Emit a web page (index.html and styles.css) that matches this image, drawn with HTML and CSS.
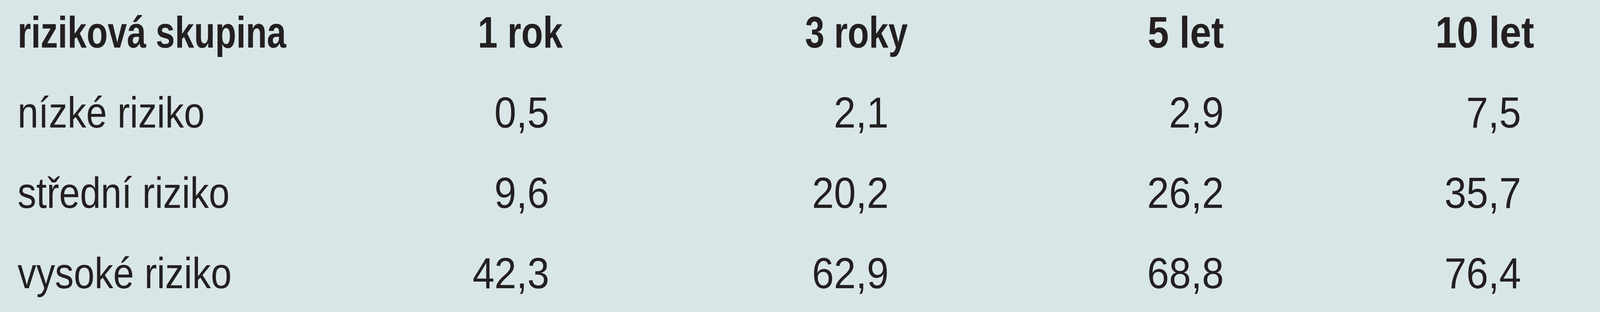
FILE: index.html
```html
<!DOCTYPE html>
<html lang="cs">
<head>
<meta charset="utf-8">
<title>Riziková skupina</title>
<link rel="stylesheet" href="styles.css">
</head>
<body>
<div class="risk-table">
  <div class="cell label head"><span class="t">riziková skupina</span></div>
  <div class="cell head c1"><span class="t">1 rok</span></div>
  <div class="cell head c2"><span class="t">3 roky</span></div>
  <div class="cell head c3"><span class="t">5 let</span></div>
  <div class="cell head c4"><span class="t">10 let</span></div>

  <div class="cell label"><span class="t">nízké riziko</span></div>
  <div class="cell num c1"><span class="t">0,5</span></div>
  <div class="cell num c2"><span class="t">2,1</span></div>
  <div class="cell num c3"><span class="t">2,9</span></div>
  <div class="cell num c4"><span class="t">7,5</span></div>

  <div class="cell label"><span class="t">střední riziko</span></div>
  <div class="cell num c1"><span class="t">9,6</span></div>
  <div class="cell num c2"><span class="t">20,2</span></div>
  <div class="cell num c3"><span class="t">26,2</span></div>
  <div class="cell num c4"><span class="t">35,7</span></div>

  <div class="cell label"><span class="t">vysoké riziko</span></div>
  <div class="cell num c1"><span class="t">42,3</span></div>
  <div class="cell num c2"><span class="t">62,9</span></div>
  <div class="cell num c3"><span class="t">68,8</span></div>
  <div class="cell num c4"><span class="t">76,4</span></div>
</div>
</body>
</html>
```

FILE: styles.css
```css
html, body {
  margin: 0;
  padding: 0;
  background: #d9e6e8;
}

body {
  width: 4113px;
  height: 800px;
  overflow: hidden;
  font-family: "Liberation Sans", Arial, sans-serif;
  color: #231f20;
}

.risk-table {
  display: grid;
  grid-template-columns: 1000px 395px 884px 809px 795px;
  row-gap: 76px;
  padding: 18px 0 0 45px;
}

.cell {
  font-size: 112px;
  line-height: 130px;
  height: 130px;
  white-space: nowrap;
  text-align: right;
}

.cell .t {
  display: inline-block;
  transform-origin: right center;
  transform: scaleX(0.9);
}

.cell.label {
  text-align: left;
}

.cell.label .t {
  transform-origin: left center;
  transform: scaleX(0.855);
}

.cell.head {
  font-size: 114px;
  font-weight: bold;
}

.cell.label.head .t { transform: scaleX(0.775); }
.head.c1 .t { transform: scaleX(0.797); }
.head.c2 .t { transform: scaleX(0.783); }
.head.c3 .t { transform: scaleX(0.855); }
.head.c4 .t { transform: scaleX(0.868); }

.num.c1 { padding-right: 34px; }
.num.c2 { padding-right: 49px; }
.num.c3 { padding-right: 0; }
.num.c4 { padding-right: 34px; }
```
